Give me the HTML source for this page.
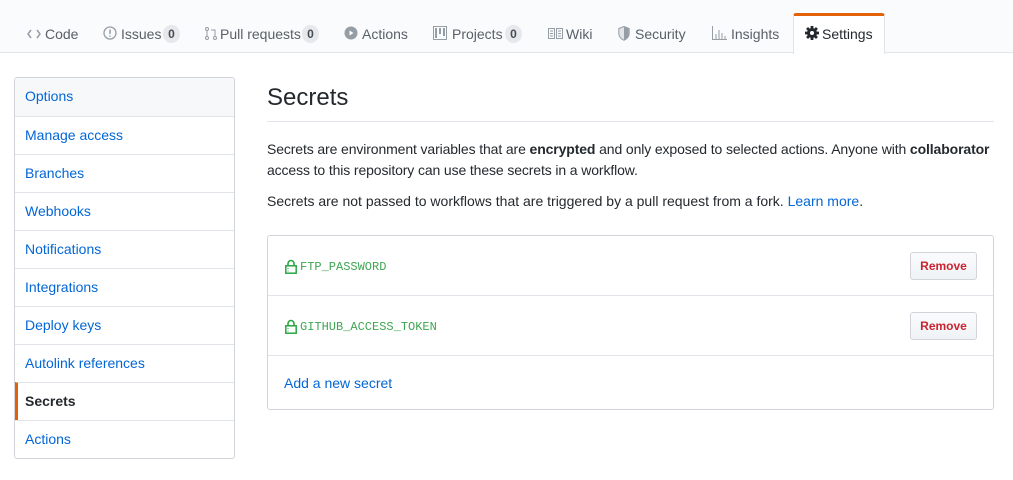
<!DOCTYPE html>
<html><head><meta charset="utf-8"><style>
*{box-sizing:border-box;margin:0;padding:0}
body{width:1013px;height:480px;overflow:hidden;background:#fff;font-family:"Liberation Sans",Arial,sans-serif;font-size:14px;color:#24292e;position:relative}
.hdr{position:absolute;left:0;top:0;width:1013px;height:53px;background:#fafbfc;border-bottom:1px solid #e1e4e8}
.t{position:absolute;top:25px;font-size:14px;color:#586069;line-height:18px;white-space:nowrap}
.ic{position:absolute;top:26px}
.cnt{position:absolute;top:25px;height:18px;width:17px;border-radius:9px;background:#e6e8eb;font-size:12px;font-weight:bold;color:#444d56;text-align:center;line-height:18px}
.set{position:absolute;left:793px;top:13px;width:92px;height:41px;background:#fff;border:1px solid #e1e4e8;border-top:3px solid #e36209;border-bottom:none;border-radius:3px 3px 0 0}
.side{position:absolute;left:14px;top:77px;width:221px;border:1px solid #d1d5da;border-radius:3px;overflow:hidden}
.side div{height:38px;line-height:37px;padding-left:10px;color:#0366d6;border-top:1px solid #e1e4e8;font-size:14px}
.side div:first-child{border-top:none;background:#f6f8fa}
.side div.sel{color:#24292e;font-weight:bold;border-left:3px solid #e36209;padding-left:7px}
h2{position:absolute;left:267px;top:84px;font-size:24px;font-weight:normal;color:#24292e}
.hr{position:absolute;left:267px;top:121px;width:727px;border-top:1px solid #e1e4e8}
p{position:absolute;left:267px;font-size:14px;line-height:21px;width:760px;white-space:nowrap}
a{color:#0366d6;text-decoration:none}
.box{position:absolute;left:267px;top:235px;width:727px;height:175px;border:1px solid #d1d5da;border-radius:3px}
.row{position:absolute;left:0;width:725px;border-top:1px solid #e1e4e8}
.sec{position:absolute;left:32px;font-family:"Liberation Mono",monospace;font-size:12px;color:#3fa553}
.lock{position:absolute;left:17px}
.btn{position:absolute;left:642px;width:67px;height:28px;border:1px solid #d1d5da;border-radius:3px;background:linear-gradient(#fafbfc,#eff3f6);color:#cb2431;font-size:12px;font-weight:bold;text-align:center;line-height:26px}
</style></head><body>
<div class="hdr"></div>
<div class="set"></div>
<svg class="ic" style="left:27px;top:28px" width="14" height="12" viewBox="0 0 14 12"><path d="M4 2L1 6l3 4M10 2l3 4-3 4" stroke="#959da5" stroke-width="1.5" fill="none"/></svg>
<span class="t" style="left:45px">Code</span>
<svg class="ic" style="left:103px" width="14" height="14"><circle cx="7" cy="7" r="6" stroke="#959da5" stroke-width="1.3" fill="none"/><path d="M7 3.5v4.5M7 9.5v1.3" stroke="#959da5" stroke-width="1.5"/></svg>
<span class="t" style="left:121px">Issues</span><span class="cnt" style="left:163px">0</span>
<svg class="ic" style="left:204px" width="14" height="14"><circle cx="3" cy="3" r="1.5" stroke="#959da5" fill="none"/><circle cx="3" cy="12" r="1.5" stroke="#959da5" fill="none"/><circle cx="11" cy="12" r="1.5" stroke="#959da5" fill="none"/><path d="M3 4.5v6M11 10.5V4H7" stroke="#959da5" fill="none"/></svg>
<span class="t" style="left:220px">Pull requests</span><span class="cnt" style="left:302px">0</span>
<svg class="ic" style="left:344px" width="14" height="14"><circle cx="7" cy="7" r="6.5" fill="#959da5"/><path d="M5.5 4.5v5l4-2.5z" fill="#fff"/></svg>
<span class="t" style="left:362px">Actions</span>
<svg class="ic" style="left:433px" width="14" height="14"><rect x="0.5" y="0.5" width="13" height="13" stroke="#959da5" fill="none"/><path d="M3 2v10M7 2v6M11 2v8" stroke="#959da5" stroke-width="2"/></svg>
<span class="t" style="left:452px">Projects</span><span class="cnt" style="left:505px">0</span>
<svg class="ic" style="left:548px;top:28px" width="15" height="11"><rect x=".5" y=".5" width="6" height="10" stroke="#959da5" fill="none"/><rect x="8.5" y=".5" width="6" height="10" stroke="#959da5" fill="none"/><path d="M2 3h3M2 5.5h3M2 8h3M10 3h3M10 5.5h3M10 8h3" stroke="#959da5"/></svg>
<span class="t" style="left:566px">Wiki</span>
<svg class="ic" style="left:618px" width="12" height="15"><path d="M6 .5L.8 2.5v5c0 3.5 2.5 5.5 5.2 6.8 2.7-1.3 5.2-3.3 5.2-6.8v-5z" stroke="#959da5" fill="#e1e4e8"/><path d="M6 1v13c2.5-1.3 4.7-3.1 4.7-6.5V2.8z" fill="#959da5"/></svg>
<span class="t" style="left:635px">Security</span>
<svg class="ic" style="left:712px" width="15" height="14"><path d="M.5 0v13.5H15M4 13V8M7 13V4M10 13V7M13 13V10" stroke="#959da5" fill="none"/></svg>
<span class="t" style="left:731px">Insights</span>
<svg class="ic" style="left:805px" width="14" height="14" viewBox="0 0 14 14"><g fill="#24292e"><circle cx="7" cy="7" r="5"/><rect x="5.6" y="0" width="2.8" height="14"/><rect x="0" y="5.6" width="14" height="2.8"/><rect x="5.6" y="0" width="2.8" height="14" transform="rotate(45 7 7)"/><rect x="5.6" y="0" width="2.8" height="14" transform="rotate(-45 7 7)"/></g><circle cx="7" cy="7" r="2" fill="#fff"/></svg>
<span class="t" style="left:822px;color:#24292e">Settings</span>

<div class="side">
<div>Options</div><div>Manage access</div><div>Branches</div><div>Webhooks</div><div>Notifications</div><div>Integrations</div><div>Deploy keys</div><div>Autolink references</div><div class="sel">Secrets</div><div>Actions</div>
</div>

<h2>Secrets</h2>
<div class="hr"></div>
<p style="top:139px;letter-spacing:-0.12px">Secrets are environment variables that are <b>encrypted</b> and only exposed to selected actions. Anyone with <b>collaborator</b><br>access to this repository can use these secrets in a workflow.</p>
<p style="top:191px">Secrets are not passed to workflows that are triggered by a pull request from a fork. <a>Learn more</a>.</p>

<div class="box">
<svg class="lock" style="top:23px" width="12" height="15"><path d="M3 7V4.5a3 3 0 0 1 6 0V7" stroke="#28a745" stroke-width="1.6" fill="none"/><rect x=".8" y="6.8" width="10.4" height="7.4" stroke="#28a745" stroke-width="1.5" fill="none"/><path d="M3 9v1M3 11.5v1" stroke="#28a745"/></svg>
<span class="sec" style="top:24px">FTP_PASSWORD</span>
<div class="btn" style="top:16px">Remove</div>
<div class="row" style="top:59px"></div>
<svg class="lock" style="top:83px" width="12" height="15"><path d="M3 7V4.5a3 3 0 0 1 6 0V7" stroke="#28a745" stroke-width="1.6" fill="none"/><rect x=".8" y="6.8" width="10.4" height="7.4" stroke="#28a745" stroke-width="1.5" fill="none"/><path d="M3 9v1M3 11.5v1" stroke="#28a745"/></svg>
<span class="sec" style="top:84px">GITHUB_ACCESS_TOKEN</span>
<div class="btn" style="top:76px">Remove</div>
<div class="row" style="top:119px"></div>
<a style="position:absolute;left:16px;top:139px">Add a new secret</a>
</div>
</body></html>
